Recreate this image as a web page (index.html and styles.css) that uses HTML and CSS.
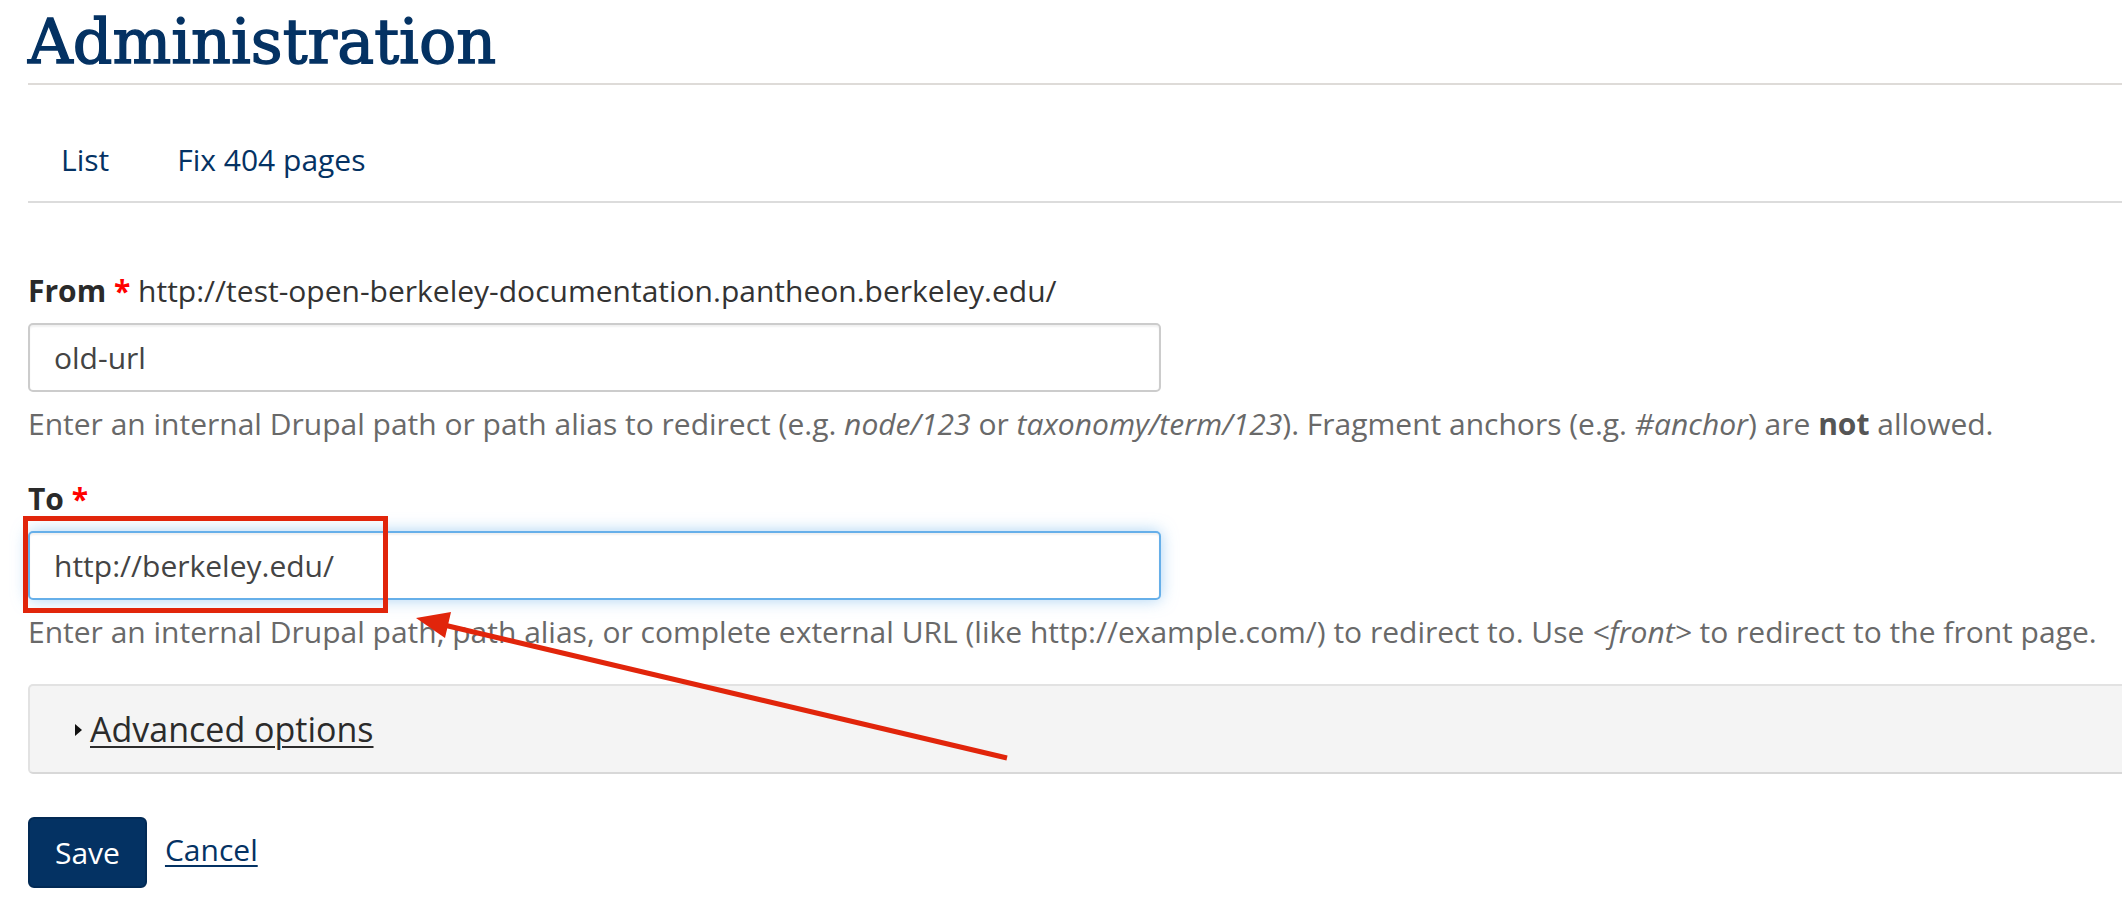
FILE: index.html
```html
<!DOCTYPE html>
<html lang="en">
<head>
<meta charset="utf-8">
<title>Administration</title>
<link rel="stylesheet" href="styles.css">
</head>
<body>
<div class="page">
  <h1 class="title">Administration</h1>
  <nav class="tabs">
    <a class="tab" href="#">List</a>
    <a class="tab" href="#">Fix 404 pages</a>
  </nav>
  <form class="form">
    <div class="field">
      <label class="label"><b>From</b> <span class="req">*</span> http://test-open-berkeley-documentation.pantheon.berkeley.edu/</label>
      <input class="input" type="text" value="old-url">
      <div class="help">Enter an internal Drupal path or path alias to redirect (e.g. <em>node/123</em> or <em>taxonomy/term/123</em>). Fragment anchors (e.g. <em>#anchor</em>) are <strong>not</strong> allowed.</div>
    </div>
    <div class="field field-to">
      <label class="label"><b>To</b> <span class="req">*</span></label>
      <input class="input input-focus" type="text" value="http://berkeley.edu/">
      <div class="help">Enter an internal Drupal path, path alias, or complete external URL (like http://example.com/) to redirect to. Use <em>&lt;front&gt;</em> to redirect to the front page.</div>
    </div>
    <div class="details">
      <div class="summary"><span class="tri"></span><a class="summary-link" href="#">Advanced options</a></div>
    </div>
    <div class="actions">
      <button class="btn" type="button">Save</button>
      <a class="cancel" href="#">Cancel</a>
    </div>
  </form>
  <div class="annot-box"></div>
  <svg class="annot-arrow" width="1100" height="800" viewBox="0 0 1100 800">
    <line x1="1007" y1="758" x2="444" y2="625" stroke="#e1250b" stroke-width="5"/>
    <polygon points="416,618 451,612 445,638" fill="#e1250b"/>
  </svg>
</div>
</body>
</html>
```
FILE: styles.css
```css
html, body {
  margin: 0;
  padding: 0;
  background: #fff;
  overflow: hidden;
}
.page {
  position: relative;
  width: 2160px;
  padding-left: 28px;
  font-family: "Open Sans", "Liberation Sans", sans-serif;
  font-size: 30px;
  color: #333;
}
.title {
  margin: 0;
  padding: 6px 0 5px;
  font-family: "DejaVu Serif", "Liberation Serif", serif;
  font-weight: normal;
  font-size: 62px;
  line-height: 72px;
  color: #043263;
  -webkit-text-stroke: 1.4px #043263;
  border-bottom: 2px solid #dedbd8;
}
.tabs {
  display: flex;
  gap: 68px;
  padding: 55px 0 21px 33px;
  line-height: 40px;
  border-bottom: 2px solid #dcdcdc;
}
.tab {
  color: #043263;
  text-decoration: none;
}
.form {
  padding-top: 68px;
}
.field {
  display: flex;
  flex-direction: column;
}
.field-to {
  margin-top: 35px;
}
.label {
  line-height: 40px;
  color: #333;
}
.label b {
  color: #2a2a2a;
}
.req {
  color: #f00;
  font-weight: bold;
}
.input {
  box-sizing: border-box;
  width: 1133px;
  height: 69px;
  margin-top: 12px;
  padding: 0 24px;
  font-family: "Open Sans", "Liberation Sans", sans-serif;
  font-size: 30px;
  color: #444;
  background: #fff;
  border: 2px solid #cccccc;
  border-radius: 5px;
  box-shadow: inset 0 2px 2px rgba(0, 0, 0, 0.06);
  outline: none;
}
.input-focus {
  border-color: #66afe9;
  box-shadow: inset 0 2px 2px rgba(0, 0, 0, 0.06), 0 0 16px rgba(102, 175, 233, 0.55);
}
.help {
  margin-top: 12px;
  line-height: 40px;
  color: #696969;
  white-space: nowrap;
}
.help strong {
  color: #555;
}
.details {
  margin-top: 32px;
  height: 86px;
  background: #f4f4f4;
  border: 2px solid #e2e2e2;
  border-bottom-color: #d8d8d8;
  border-radius: 5px;
  display: flex;
  align-items: center;
}
.summary {
  display: flex;
  align-items: center;
  padding-left: 45px;
  font-size: 34px;
  line-height: 46px;
}
.tri {
  width: 0;
  height: 0;
  border-top: 6px solid transparent;
  border-bottom: 6px solid transparent;
  border-left: 7px solid #111;
  margin-right: 8px;
  margin-top: 2px;
}
.summary-link {
  color: #2b2b2b;
  text-decoration: underline;
  text-underline-offset: 4px;
  text-decoration-thickness: 2px;
}
.actions {
  display: flex;
  align-items: center;
  gap: 18px;
  margin-top: 43px;
}
.btn {
  box-sizing: border-box;
  height: 71px;
  padding: 0 25px;
  font-family: "Open Sans", "Liberation Sans", sans-serif;
  font-size: 30px;
  color: #fff;
  background: #043263;
  border: 2px solid #022a55;
  border-radius: 6px;
}
.cancel {
  color: #043263;
  text-decoration: underline;
  text-underline-offset: 4px;
  text-decoration-thickness: 2px;
  margin-top: -6px;
}
.annot-box {
  position: absolute;
  left: 23px;
  top: 516px;
  width: 355px;
  height: 87px;
  border: 5px solid #e1250b;
}
.annot-arrow {
  position: absolute;
  left: 0;
  top: 0;
  pointer-events: none;
}
```
